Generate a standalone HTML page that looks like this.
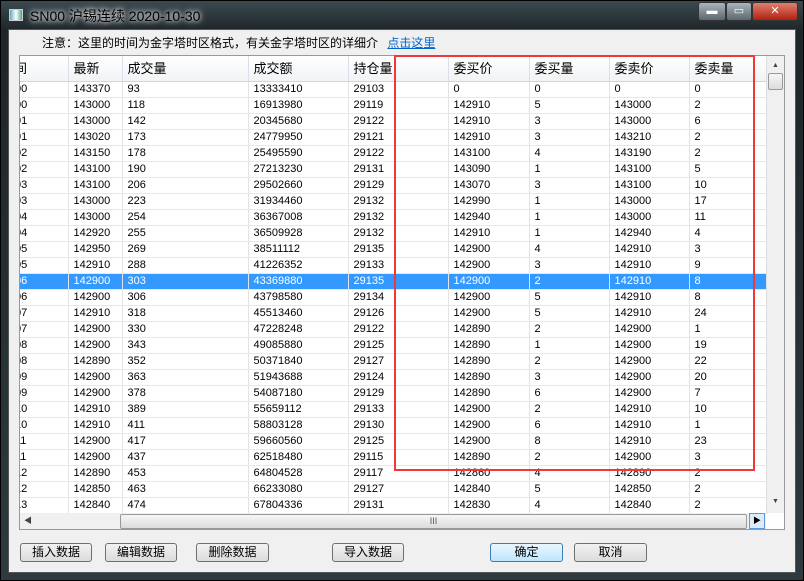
<!DOCTYPE html>
<html><head><meta charset="utf-8"><style>
*{margin:0;padding:0;box-sizing:border-box}
body{width:804px;height:581px;overflow:hidden;background:#1a2a30;font-family:"Liberation Sans","Noto Sans CJK SC",sans-serif;font-size:12px;position:relative}
.frame{position:absolute;left:0;top:0;width:804px;height:581px;background:linear-gradient(180deg,#3c4a50 0,#1d2528 30px,#2e3a40 100%);border:1px solid #000}
.title{position:absolute;left:30px;top:6px;color:#000;font-size:14px;text-shadow:0 0 8px #fff,0 0 4px #fff}
.ico{position:absolute;left:9px;top:9px;width:14px;height:12px;background:linear-gradient(90deg,#6ab 0,#fff 50%,#4a8 100%);border:1px solid #ccc}
.client{position:absolute;left:8px;top:29px;width:788px;height:544px;background:#f0f0f0;border:1px solid #555}
.btns{position:absolute;top:2px;right:6px;height:19px;display:flex}
.btns div{height:19px;border:1px solid #333;border-radius:3px;background:linear-gradient(#aab4bc,#5a6870);color:#fff;font-size:11px;text-align:center;line-height:17px}
.note{position:absolute;left:42px;top:34px;font-size:12px;color:#000}
.note a{color:#06c;text-decoration:underline;margin-left:6px}
.grid{position:absolute;left:19px;top:55px;width:766px;height:475px;border:1px solid #999;background:#fff;overflow:hidden}
table{position:absolute;left:0;top:0;border-collapse:collapse;table-layout:fixed}
td{height:16px;border-right:1px solid #e3e3e3;border-bottom:1px solid #e8e8e8;padding-left:5px;font-size:11px;white-space:nowrap;overflow:hidden;line-height:15px}
td:first-child{padding-left:0;text-indent:-5px}
tr.h td{height:25px;background:linear-gradient(#fff,#f2f3f5);border-right:1px solid #dde;border-bottom:1px solid #d5d5d5;font-size:13px}
tr.h td:first-child{text-indent:-6px}
tr.s td{background:#3399ff;color:#fff}
.vs{position:absolute;left:746px;top:0;width:18px;height:457px;background:#f0f0f0;border-left:1px solid #ddd}
.hs{position:absolute;left:0;top:457px;width:746px;height:17px;background:#f0f0f0}
.thumb{position:absolute;background:linear-gradient(#f6f6f6,#dcdcdc);border:1px solid #999;border-radius:2px}
.red{position:absolute;left:394px;top:55px;width:361px;height:416px;border:2px solid #f03838}
.b{position:absolute;top:543px;height:19px;border:1px solid #707070;border-radius:3px;background:linear-gradient(#f2f2f2,#dcdcdc);font-size:12px;text-align:center;line-height:17px}
</style></head><body>
<div class="frame"></div>
<div class="ico"></div>
<div class="title">SN00 沪锡连续 2020-10-30</div>
<div class="btns"><div style="width:28px">▬</div><div style="width:26px">▭</div><div style="width:46px;background:linear-gradient(#e08070,#b02010)">✕</div></div>
<div class="client"></div>
<div class="note">注意：这里的时间为金字塔时区格式，有关金字塔时区的详细介 <a>点击这里</a></div>
<div class="grid">
<table>
<colgroup><col style="width:48px"><col style="width:54px"><col style="width:126px"><col style="width:100px"><col style="width:100px"><col style="width:81px"><col style="width:80px"><col style="width:80px"><col style="width:78px"></colgroup>
<tr class="h"><td>间</td><td>最新</td><td>成交量</td><td>成交额</td><td>持仓量</td><td>委买价</td><td>委买量</td><td>委卖价</td><td>委卖量</td></tr>
<tr><td>00</td><td>143370</td><td>93</td><td>13333410</td><td>29103</td><td>0</td><td>0</td><td>0</td><td>0</td></tr>
<tr><td>00</td><td>143000</td><td>118</td><td>16913980</td><td>29119</td><td>142910</td><td>5</td><td>143000</td><td>2</td></tr>
<tr><td>01</td><td>143000</td><td>142</td><td>20345680</td><td>29122</td><td>142910</td><td>3</td><td>143000</td><td>6</td></tr>
<tr><td>01</td><td>143020</td><td>173</td><td>24779950</td><td>29121</td><td>142910</td><td>3</td><td>143210</td><td>2</td></tr>
<tr><td>02</td><td>143150</td><td>178</td><td>25495590</td><td>29122</td><td>143100</td><td>4</td><td>143190</td><td>2</td></tr>
<tr><td>02</td><td>143100</td><td>190</td><td>27213230</td><td>29131</td><td>143090</td><td>1</td><td>143100</td><td>5</td></tr>
<tr><td>03</td><td>143100</td><td>206</td><td>29502660</td><td>29129</td><td>143070</td><td>3</td><td>143100</td><td>10</td></tr>
<tr><td>03</td><td>143000</td><td>223</td><td>31934460</td><td>29132</td><td>142990</td><td>1</td><td>143000</td><td>17</td></tr>
<tr><td>04</td><td>143000</td><td>254</td><td>36367008</td><td>29132</td><td>142940</td><td>1</td><td>143000</td><td>11</td></tr>
<tr><td>04</td><td>142920</td><td>255</td><td>36509928</td><td>29132</td><td>142910</td><td>1</td><td>142940</td><td>4</td></tr>
<tr><td>05</td><td>142950</td><td>269</td><td>38511112</td><td>29135</td><td>142900</td><td>4</td><td>142910</td><td>3</td></tr>
<tr><td>05</td><td>142910</td><td>288</td><td>41226352</td><td>29133</td><td>142900</td><td>3</td><td>142910</td><td>9</td></tr>
<tr class="s"><td>06</td><td>142900</td><td>303</td><td>43369880</td><td>29135</td><td>142900</td><td>2</td><td>142910</td><td>8</td></tr>
<tr><td>06</td><td>142900</td><td>306</td><td>43798580</td><td>29134</td><td>142900</td><td>5</td><td>142910</td><td>8</td></tr>
<tr><td>07</td><td>142910</td><td>318</td><td>45513460</td><td>29126</td><td>142900</td><td>5</td><td>142910</td><td>24</td></tr>
<tr><td>07</td><td>142900</td><td>330</td><td>47228248</td><td>29122</td><td>142890</td><td>2</td><td>142900</td><td>1</td></tr>
<tr><td>08</td><td>142900</td><td>343</td><td>49085880</td><td>29125</td><td>142890</td><td>1</td><td>142900</td><td>19</td></tr>
<tr><td>08</td><td>142890</td><td>352</td><td>50371840</td><td>29127</td><td>142890</td><td>2</td><td>142900</td><td>22</td></tr>
<tr><td>09</td><td>142900</td><td>363</td><td>51943688</td><td>29124</td><td>142890</td><td>3</td><td>142900</td><td>20</td></tr>
<tr><td>09</td><td>142900</td><td>378</td><td>54087180</td><td>29129</td><td>142890</td><td>6</td><td>142900</td><td>7</td></tr>
<tr><td>10</td><td>142910</td><td>389</td><td>55659112</td><td>29133</td><td>142900</td><td>2</td><td>142910</td><td>10</td></tr>
<tr><td>10</td><td>142910</td><td>411</td><td>58803128</td><td>29130</td><td>142900</td><td>6</td><td>142910</td><td>1</td></tr>
<tr><td>11</td><td>142900</td><td>417</td><td>59660560</td><td>29125</td><td>142900</td><td>8</td><td>142910</td><td>23</td></tr>
<tr><td>11</td><td>142900</td><td>437</td><td>62518480</td><td>29115</td><td>142890</td><td>2</td><td>142900</td><td>3</td></tr>
<tr><td>12</td><td>142890</td><td>453</td><td>64804528</td><td>29117</td><td>142860</td><td>4</td><td>142890</td><td>2</td></tr>
<tr><td>12</td><td>142850</td><td>463</td><td>66233080</td><td>29127</td><td>142840</td><td>5</td><td>142850</td><td>2</td></tr>
<tr><td>13</td><td>142840</td><td>474</td><td>67804336</td><td>29131</td><td>142830</td><td>4</td><td>142840</td><td>2</td></tr>
</table>
<div class="vs"><div style="position:absolute;left:5px;top:6px;font-size:7px;color:#444">▲</div><div class="thumb" style="left:1px;top:17px;width:15px;height:17px"></div><div style="position:absolute;left:5px;top:442px;font-size:7px;color:#444">▼</div></div>
<div class="hs"><div style="position:absolute;left:4px;top:2px;font-size:8px;color:#444">◀</div><div class="thumb" style="left:100px;top:1px;width:627px;height:15px;text-align:center;font-size:9px;line-height:13px;color:#555">III</div><div style="position:absolute;left:729px;top:0;width:16px;height:16px;border:1px solid #5a9ad6;background:#dcecfc;font-size:8px;text-align:center;line-height:14px">▶</div></div>
</div>
<div class="red"></div>
<div class="b" style="left:20px;width:72px">插入数据</div>
<div class="b" style="left:105px;width:72px">编辑数据</div>
<div class="b" style="left:196px;width:73px">删除数据</div>
<div class="b" style="left:332px;width:72px">导入数据</div>
<div class="b" style="left:490px;width:73px;border-color:#3c7fb1;background:linear-gradient(#eaf6fd,#bee6fd)">确定</div>
<div class="b" style="left:574px;width:73px">取消</div>
</body></html>
